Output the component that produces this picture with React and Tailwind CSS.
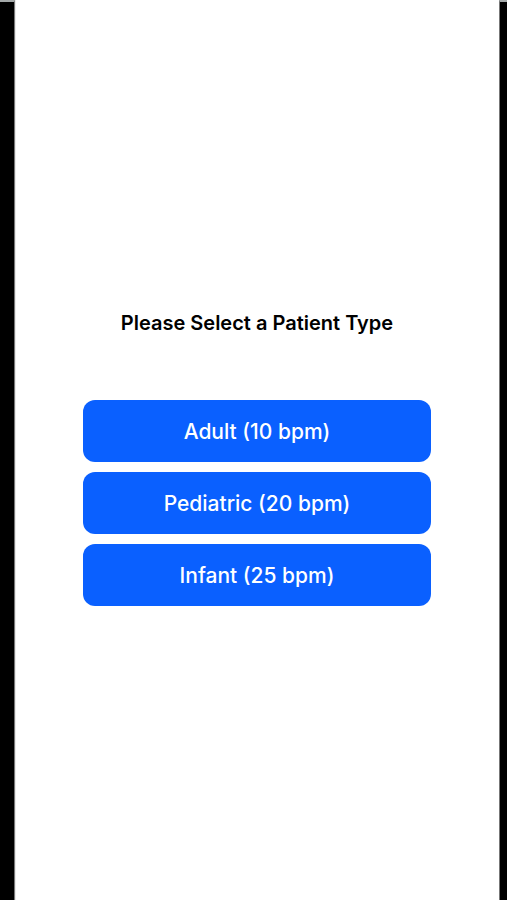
const patientTypes = [
  { name: 'Adult', bpm: 10 },
  { name: 'Pediatric', bpm: 20 },
  { name: 'Infant', bpm: 25 },
];

const App = () => {
  return (
    <div className="min-h-screen flex bg-black font-['Inter','Liberation_Sans',sans-serif]">
      {/* Device edges */}
      <div className="w-[15px] border-t-2 border-t-[#a3a8a8] border-r border-r-[#777777]" />

      <main className="flex-1 flex flex-col items-center bg-white border-l border-[#e9e9e9] pl-[67px] pr-[68px] pt-[308px]">
        <h1 className="text-xl leading-[30px] font-semibold text-black whitespace-nowrap">
          Please Select a Patient Type
        </h1>

        <div className="w-full mt-[62px] flex flex-col gap-[10px]">
          {patientTypes.map(({ name, bpm }) => (
            <button
              key={name}
              type="button"
              className="w-full h-[62px] pt-[2px] rounded-xl bg-[#0a60ff] text-[21px] font-medium text-white"
            >
              {name} ({bpm} bpm)
            </button>
          ))}
        </div>
      </main>

      <div className="w-2 border-t-2 border-t-[#a3a8a8] border-l border-l-[#777777]" />
    </div>
  );
};

export default App;
